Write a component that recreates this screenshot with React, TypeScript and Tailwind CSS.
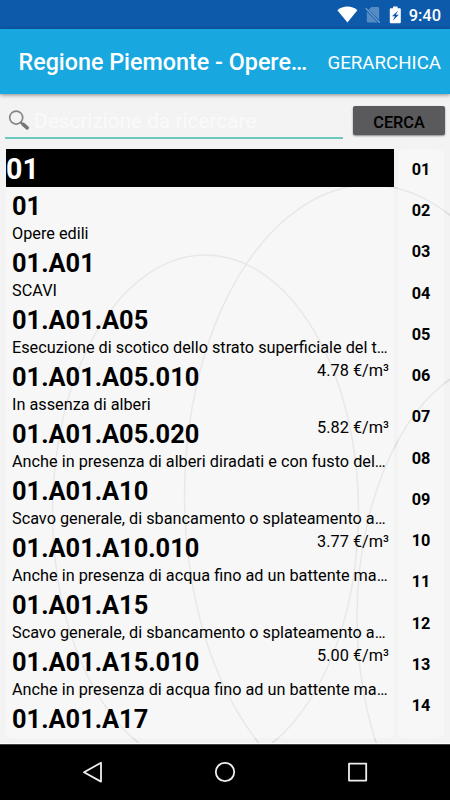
import { useState } from 'react'

interface Voce {
  codice: string
  descrizione?: string
  prezzo?: string
}

const VOCI: Voce[] = [
  { codice: '01', descrizione: 'Opere edili' },
  { codice: '01.A01', descrizione: 'SCAVI' },
  { codice: '01.A01.A05', descrizione: 'Esecuzione di scotico dello strato superficiale del t…' },
  { codice: '01.A01.A05.010', descrizione: 'In assenza di alberi', prezzo: '4.78 €/m³' },
  { codice: '01.A01.A05.020', descrizione: 'Anche in presenza di alberi diradati e con fusto del…', prezzo: '5.82 €/m³' },
  { codice: '01.A01.A10', descrizione: 'Scavo generale, di sbancamento o splateamento a…' },
  { codice: '01.A01.A10.010', descrizione: 'Anche in presenza di acqua fino ad un battente ma…', prezzo: '3.77 €/m³' },
  { codice: '01.A01.A15', descrizione: 'Scavo generale, di sbancamento o splateamento a…' },
  { codice: '01.A01.A15.010', descrizione: 'Anche in presenza di acqua fino ad un battente ma…', prezzo: '5.00 €/m³' },
  { codice: '01.A01.A17' },
]

const CAPITOLI = ['01', '02', '03', '04', '05', '06', '07', '08', '09', '10', '11', '12', '13', '14']

function StatusBar() {
  return (
    <div className="flex h-[29px] shrink-0 items-center justify-end bg-[#0d5aab] pr-[9px] text-white">
      <svg width="21" height="17" viewBox="0 0 21 17" fill="currentColor">
        <path d="M10.4 16.6 0.4 4.2C3.2 1.9 6.7 0.6 10.4 0.6s7.2 1.3 10 3.6z" />
      </svg>
      <svg className="ml-[7px]" width="16" height="18" viewBox="0 0 16 18">
        <path d="M6.5 1H13a1.2 1.2 0 0 1 1.2 1.2V14L3.6 3.8zM1.8 5.6 12.6 16.4H3a1.2 1.2 0 0 1-1.2-1.2z" fill="#fff" fillOpacity=".3" />
        <path d="M0.7 2.2 14.8 16.8" stroke="#fff" strokeOpacity=".4" strokeWidth="1.3" />
      </svg>
      <svg className="ml-[8px]" width="13" height="18" viewBox="0 0 13 18">
        <path d="M4 0.5h4.6v1.7h2.2a1 1 0 0 1 1 1v13a1 1 0 0 1-1 1h-9a1 1 0 0 1-1-1v-13a1 1 0 0 1 1-1H4z" fill="#fff" />
        <path d="M9.2 4.5 3 10.3h2.9L3.8 14.7 9.8 8.7H6.8z" fill="#0d5aab" />
      </svg>
      <span className="ml-[7px] pt-[3px] text-[16.4px] leading-none font-medium">9:40</span>
    </div>
  )
}

function AppBar() {
  return (
    <header className="z-10 flex h-[65px] shrink-0 items-center justify-between bg-[#19a7e0] pt-[3px] pr-[9px] pl-[18.5px] whitespace-nowrap text-white shadow-[0_1px_4px_rgba(0,0,0,0.45)]">
      <h1 className="text-[23.3px] leading-none font-medium">Regione Piemonte - Opere…</h1>
      <button className="text-[18.7px] leading-none">GERARCHICA</button>
    </header>
  )
}

function Sfondo() {
  return (
    <svg className="absolute inset-0 -z-10" width="450" height="800" fill="none" stroke="#dcdcdc" strokeWidth="1.5">
      <ellipse cx="205.5" cy="512" rx="153" ry="257" />
      <ellipse cx="370" cy="495" rx="185.5" ry="310" />
      <ellipse cx="507" cy="617" rx="150" ry="257" />
    </svg>
  )
}

function Ricerca() {
  const [testo, setTesto] = useState('')

  return (
    <div className="flex h-[55px] shrink-0 items-start bg-[#f3f3f3] pt-[11px] pr-[5px] pl-[5px]">
      <div className="flex h-[34px] w-[338px] items-center border-b-2 border-[#6cc9bd] pl-[3px]">
        <svg className="mt-px shrink-0" width="23" height="23" viewBox="0 0 23 23" fill="none">
          <circle cx="8.2" cy="7.6" r="6.5" stroke="#858585" strokeWidth="1.7" />
          <path d="m12.6 12.2 2 2" stroke="#777" strokeWidth="2" />
          <path d="m15.2 14.4 4 3.4" stroke="#757575" strokeWidth="3.6" strokeLinecap="round" />
        </svg>
        <input
          value={testo}
          onChange={e => setTesto(e.target.value)}
          placeholder="Descrizione da ricercare"
          className="ml-[3px] w-full bg-transparent text-[20.8px] leading-none outline-none placeholder:text-[#fafafa]"
        />
      </div>
      <button className="mt-px ml-[10px] flex h-[29px] w-[92px] items-center justify-center rounded-[2px] bg-[#5a595b] pt-[5px] text-[16.3px] font-medium text-black shadow-[0_1px_2px_rgba(0,0,0,0.45)]">
        CERCA
      </button>
    </div>
  )
}

function RigaVoce({ voce }: { voce: Voce }) {
  return (
    <li className="h-[57.05px] shrink-0 whitespace-nowrap">
      <div className="flex h-[37px] items-start justify-between">
        <span className="pt-[3.9px] text-[25.4px] leading-[30px] font-bold">{voce.codice}</span>
        {voce.prezzo && <span className="pt-[3px] text-[16.3px] leading-[19px]">{voce.prezzo}</span>}
      </div>
      <p className="text-[16.25px] leading-[19px]">{voce.descrizione}</p>
    </li>
  )
}

function NavBar() {
  return (
    <nav className="h-[56px] shrink-0 border-t border-[#444] bg-black">
      <svg width="450" height="55" viewBox="0 0 450 55" fill="none" stroke="#eee" strokeWidth="1.8" strokeLinejoin="round">
        <path d="M101 17.8v18.8L84 27.2z" />
        <circle cx="225" cy="27" r="9.2" />
        <rect x="349" y="18.6" width="17.2" height="17" />
      </svg>
    </nav>
  )
}

export default function App() {
  return (
    <div className="relative isolate flex h-[800px] w-[450px] flex-col overflow-hidden bg-[#f3f3f3] font-[Roboto,sans-serif] text-black">
      <Sfondo />
      <StatusBar />
      <AppBar />
      <Ricerca />

      <main className="flex h-[595px] shrink-0 gap-[4px] border-b border-white pr-[6px] pb-[5px] pl-[6px]">
        <section className="flex w-[388px] flex-col overflow-hidden rounded-b-[5px] bg-white/35">
          <h2 className="flex h-[38px] shrink-0 items-center bg-black pt-[3px] text-[28.6px] leading-none font-bold text-white">01</h2>
          <ul className="flex min-h-0 flex-1 flex-col pr-[5px] pl-[6px]">
            {VOCI.map(voce => (
              <RigaVoce key={voce.codice} voce={voce} />
            ))}
          </ul>
        </section>

        <aside className="w-[46px] overflow-hidden rounded-[6px] bg-white/35">
          {CAPITOLI.map(capitolo => (
            <button key={capitolo} className="flex h-[41.25px] w-full items-center justify-center pt-[1px] text-[16.3px] leading-none font-bold">
              {capitolo}
            </button>
          ))}
        </aside>
      </main>

      <NavBar />
    </div>
  )
}
